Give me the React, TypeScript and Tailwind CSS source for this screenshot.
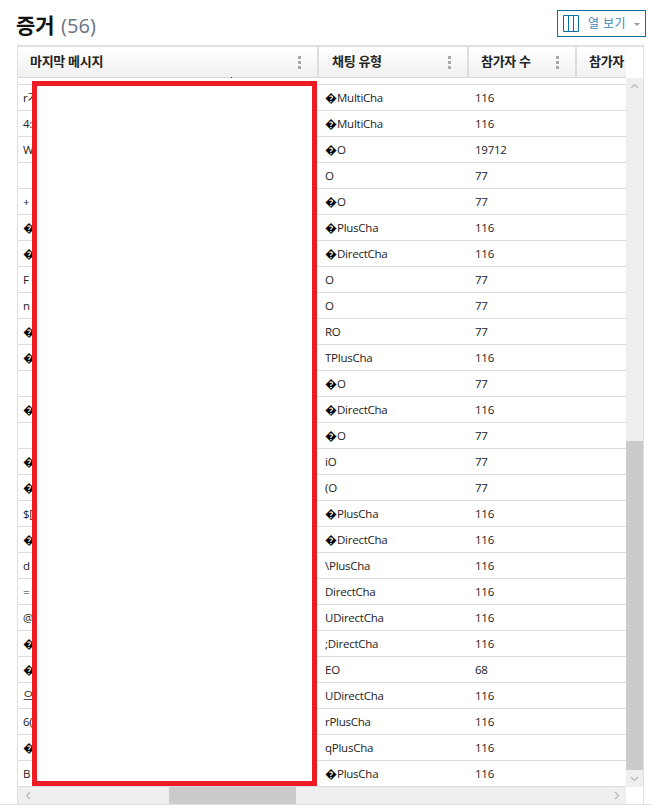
import React from "react";

// Table rows: clipped first column, chat type, participant count
const rows: [string, string, string][] = [
    ["r가", "\uFFFDMultiCha", "116"],
    ["4:", "\uFFFDMultiCha", "116"],
    ["W", "\uFFFDO", "19712"],
    ["", "O", "77"],
    ["+", "\uFFFDO", "77"],
    ["\uFFFD", "\uFFFDPlusCha", "116"],
    ["\uFFFD", "\uFFFDDirectCha", "116"],
    ["F", "O", "77"],
    ["n", "O", "77"],
    ["\uFFFD", "RO", "77"],
    ["\uFFFD", "TPlusCha", "116"],
    ["", "\uFFFDO", "77"],
    ["\uFFFD", "\uFFFDDirectCha", "116"],
    ["", "\uFFFDO", "77"],
    ["\uFFFD", "iO", "77"],
    ["\uFFFD", "(O", "77"],
    ["$[", "\uFFFDPlusCha", "116"],
    ["\uFFFD", "\uFFFDDirectCha", "116"],
    ["d", "\\PlusCha", "116"],
    ["=", "DirectCha", "116"],
    ["@", "UDirectCha", "116"],
    ["\uFFFD", ";DirectCha", "116"],
    ["\uFFFD", "EO", "68"],
    ["으", "UDirectCha", "116"],
    ["6(", "rPlusCha", "116"],
    ["\uFFFD", "qPlusCha", "116"],
    ["B", "\uFFFDPlusCha", "116"],
];

const MenuDots = () => (
    <svg width="3" height="13" viewBox="0 0 3 13" className="shrink-0" fill="#aaaaaa">
        <rect x="0" y="0" width="3" height="3" />
        <rect x="0" y="5" width="3" height="3" />
        <rect x="0" y="10" width="3" height="3" />
    </svg>
);

const Chevron = ({ d }: { d: string }) => (
    <svg width="9" height="9" viewBox="0 0 9 9" fill="none" stroke="#b5b5b5" strokeWidth="1.2">
        <path d={d} />
    </svg>
);

// The broken-character glyph stays 12px wide while the rest of the cell is narrower
const CellText = ({ text }: { text: string }) =>
    text.startsWith("\uFFFD") ? (
        <>
            <span className="text-[12px] leading-none tracking-normal font-bold text-black">{"\uFFFD"}</span>
            {text.slice(1)}
        </>
    ) : (
        <>{text}</>
    );

const App = () => {
    return (
        <div className="relative w-[652px] h-[805px] border-b border-[#dde1e6] bg-white text-[11.5px] text-[#222222] font-['Open_Sans','Noto_Sans_CJK_KR',sans-serif]">
            <div className="h-[45px] flex justify-between pl-[16px] pr-[6px] pt-[10px]">
                <h1 className="text-[21px] leading-[30px] font-bold text-[#111111]">
                    증거 <span className="text-[20px] font-normal text-[#6b7280] ml-[1px]">(56)</span>
                </h1>
                <button className="w-[89px] h-[27px] border border-[#0b6fa4] flex items-center pl-[5px]">
                    <svg width="17" height="17" viewBox="0 0 17 17" fill="none" stroke="#0b6fa4">
                        <path d="M.5.5h15v16H.5zM5.5.5v16M10.5.5v16" />
                    </svg>
                    <span className="ml-[8px] text-[12px] text-[#3b87b8] tracking-[0.4px]">열 보기</span>
                    <span className="ml-[8px] mt-[2px] w-0 h-0 border-x-[3px] border-x-transparent border-t-[3px] border-t-[#999999]" />
                </button>
            </div>

            <div className="ml-[17px] w-[627px] h-[759px] border-x border-t-2 border-[#dde1e6] flex">
                <div className="w-[608px] flex flex-col">
                    {/* Header */}
                    <div className="h-[31px] shrink-0 flex border-b border-[#d9d9d9] text-[13px] tracking-[-0.3px] font-bold text-[#222222] bg-gradient-to-b from-white to-[#f0f0f0]">
                        <div className="w-[301px] shrink-0 border-r-2 border-[#dddddd] flex items-center justify-between pl-[12px] pr-[16px]">
                            <span>마지막 메시지</span>
                            <MenuDots />
                        </div>
                        <div className="w-[150px] shrink-0 border-r-2 border-[#dddddd] flex items-center justify-between pl-[13px] pr-[16px]">
                            <span>채팅 유형</span>
                            <MenuDots />
                        </div>
                        <div className="w-[108px] shrink-0 border-r-2 border-[#dddddd] flex items-center justify-between pl-[12px] pr-[16px]">
                            <span>참가자 수</span>
                            <MenuDots />
                        </div>
                        <div className="w-[49px] shrink-0 whitespace-nowrap flex items-center pl-[12px]">
                            참가자
                        </div>
                    </div>

                    {/* Body */}
                    <div className="h-[709px] shrink-0 overflow-hidden">
                        <div className="h-[7px] border-b border-[#dddddd]" />
                        {rows.map((row, i) => (
                            <div key={i} className="h-[26px] flex border-b border-[#dddddd] whitespace-nowrap leading-[26px] tracking-[-0.25px]">
                                <div className="w-[301px] shrink-0 pl-[5px]"><CellText text={row[0]} /></div>
                                <div className="w-[150px] shrink-0 pl-[6px]"><CellText text={row[1]} /></div>
                                <div className="w-[108px] shrink-0 pl-[6px]">{row[2]}</div>
                            </div>
                        ))}
                    </div>

                    {/* Horizontal scrollbar */}
                    <div className="h-[17px] shrink-0 bg-[#efefef] flex items-center">
                        <div className="w-[151px] pl-[6px] flex items-center">
                            <Chevron d="M6 1 2.500 4.500 6 8" />
                        </div>
                        <div className="w-[127px] h-full bg-[#cbcbcb]" />
                        <div className="flex-1 flex justify-end items-center pr-[5px]">
                            <Chevron d="M3 1l3.500 3.500L3 8" />
                        </div>
                    </div>
                </div>

                {/* Vertical scrollbar */}
                <div className="w-[17px] flex flex-col">
                    <div className="h-[31px] shrink-0 bg-white" />
                    <div className="h-[709px] shrink-0 bg-[#efefef] flex flex-col">
                        <div className="h-[17px] shrink-0 flex items-center justify-center">
                            <Chevron d="M1 6l3.500-3.500L8 6" />
                        </div>
                        <div className="h-[346px] shrink-0" />
                        <div className="h-[329px] shrink-0 bg-[#cbcbcb]" />
                        <div className="flex-1 flex items-center justify-center">
                            <Chevron d="M1 3l3.500 3.500L8 3" />
                        </div>
                    </div>
                    <div className="flex-1 bg-white" />
                </div>
            </div>

            {/* Redaction box drawn over the table */}
            <div className="absolute left-[32px] top-[81px] w-[285px] h-[705px] border-[5px] border-[#ed1c24] bg-white" />
            <div className="absolute left-[231px] top-[77px] w-px h-px bg-[#333333]" />
        </div>
    );
};

export default App;
